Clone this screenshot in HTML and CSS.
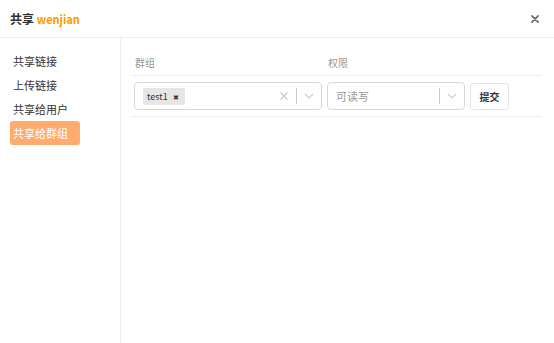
FILE: index.html
```html
<!DOCTYPE html>
<html lang="zh">
<head>
    <meta charset="UTF-8">
    <title>共享</title>
    <link rel="stylesheet" href="styles.css">
</head>
<body>
    <div class="dialog">
        <div class="dialog-header">
            <span class="title">共享 <span class="file-name">wenjian</span></span>
            <span class="close">
                <svg width="8" height="8" viewBox="0 0 8 8"><path d="M1 1L7 7M7 1L1 7" stroke="#777" stroke-width="1.8" stroke-linecap="round"/></svg>
            </span>
        </div>
        <div class="dialog-body">
            <div class="side-menu">
                <div class="menu-item">共享链接</div>
                <div class="menu-item">上传链接</div>
                <div class="menu-item">共享给用户</div>
                <div class="menu-item active">共享给群组</div>
            </div>
            <div class="content">
                <div class="share-row share-head">
                    <div class="col-label">群组</div>
                    <div class="col-label">权限</div>
                    <div></div>
                </div>
                <div class="share-row share-form">
                    <div class="select">
                        <div class="select-value">
                            <span class="tag">test1 <span class="tag-remove">&#x2716;</span></span>
                        </div>
                        <span class="indicator clear">
                            <svg width="10" height="10" viewBox="0 0 10 10"><path d="M1.5 1.5L8.5 8.5M8.5 1.5L1.5 8.5" stroke="#ccc" stroke-width="1.3"/></svg>
                        </span>
                        <span class="separator"></span>
                        <span class="indicator">
                            <svg width="10" height="6" viewBox="0 0 10 6"><path d="M1 1L5 5L9 1" fill="none" stroke="#ccc" stroke-width="1.2"/></svg>
                        </span>
                    </div>
                    <div class="select">
                        <div class="select-value placeholder">可读写</div>
                        <span class="separator"></span>
                        <span class="indicator">
                            <svg width="10" height="6" viewBox="0 0 10 6"><path d="M1 1L5 5L9 1" fill="none" stroke="#ccc" stroke-width="1.2"/></svg>
                        </span>
                    </div>
                    <div><button class="btn-submit">提交</button></div>
                </div>
            </div>
        </div>
    </div>
</body>
</html>
```

FILE: styles.css
```css
body {
    margin: 0;
    font-family: "Noto Sans CJK SC", "Noto Sans", sans-serif;
    color: #333;
    background-color: #fff;
}
.dialog {
    width: 554px;
    height: 343px;
    display: flex;
    flex-direction: column;
}
.dialog-header {
    height: 38px;
    border-bottom: 1px solid #eee;
    display: flex;
    align-items: center;
    justify-content: space-between;
    padding: 0 13px 0 10px;
    box-sizing: border-box;
}
.title {
    font-size: 12px;
    font-weight: bold;
    color: #333;
}
.file-name {
    color: #f90;
    font-size: 11px;
}
.close {
    display: flex;
    width: 12px;
    justify-content: center;
}
.dialog-body {
    flex: 1;
    display: flex;
}
.side-menu {
    width: 121px;
    border-right: 1px solid #eee;
    padding: 11px 10px 0;
    box-sizing: border-box;
}
.menu-item {
    height: 24px;
    line-height: 24px;
    font-size: 11px;
    color: #333;
    padding-left: 3px;
    width: 70px;
    box-sizing: border-box;
    border-radius: 3px;
    white-space: nowrap;
}
.menu-item.active {
    background-color: #ffab70;
    color: #fff;
}
.content {
    flex: 1;
    padding: 12px 12px 0 10px;
}
.share-row {
    display: grid;
    grid-template-columns: 188px 138px auto;
    column-gap: 5px;
    padding: 0 3px;
    border-bottom: 1px solid #eee;
}
.share-head {
    height: 25px;
    align-items: center;
}
.col-label {
    font-size: 10px;
    color: #999;
    padding-left: 1px;
}
.share-form {
    padding-top: 6px;
    padding-bottom: 6px;
}
.select {
    height: 28px;
    border: 1px solid #d9d9d9;
    border-radius: 4px;
    box-sizing: border-box;
    display: flex;
    align-items: center;
}
.select-value {
    flex: 1;
    padding-left: 8px;
    font-size: 11px;
}
.placeholder {
    color: #999;
}
.tag {
    display: inline-block;
    background-color: #e6e6e6;
    border-radius: 2px;
    font-size: 9px;
    line-height: 17px;
    height: 17px;
    padding: 0 6px 0 4px;
    color: #333;
}
.tag-remove {
    font-size: 7px;
    margin-left: 3px;
}
.indicator {
    width: 24px;
    display: flex;
    justify-content: center;
}
.separator {
    width: 1px;
    height: 16px;
    background-color: #ccc;
}
.btn-submit {
    height: 27px;
    width: 39px;
    border: 1px solid #e5e5e5;
    border-radius: 3px;
    background-color: #fff;
    font-family: "Noto Sans CJK SC", sans-serif;
    font-size: 10px;
    font-weight: bold;
    color: #333;
    padding: 0;
    cursor: pointer;
}
```
